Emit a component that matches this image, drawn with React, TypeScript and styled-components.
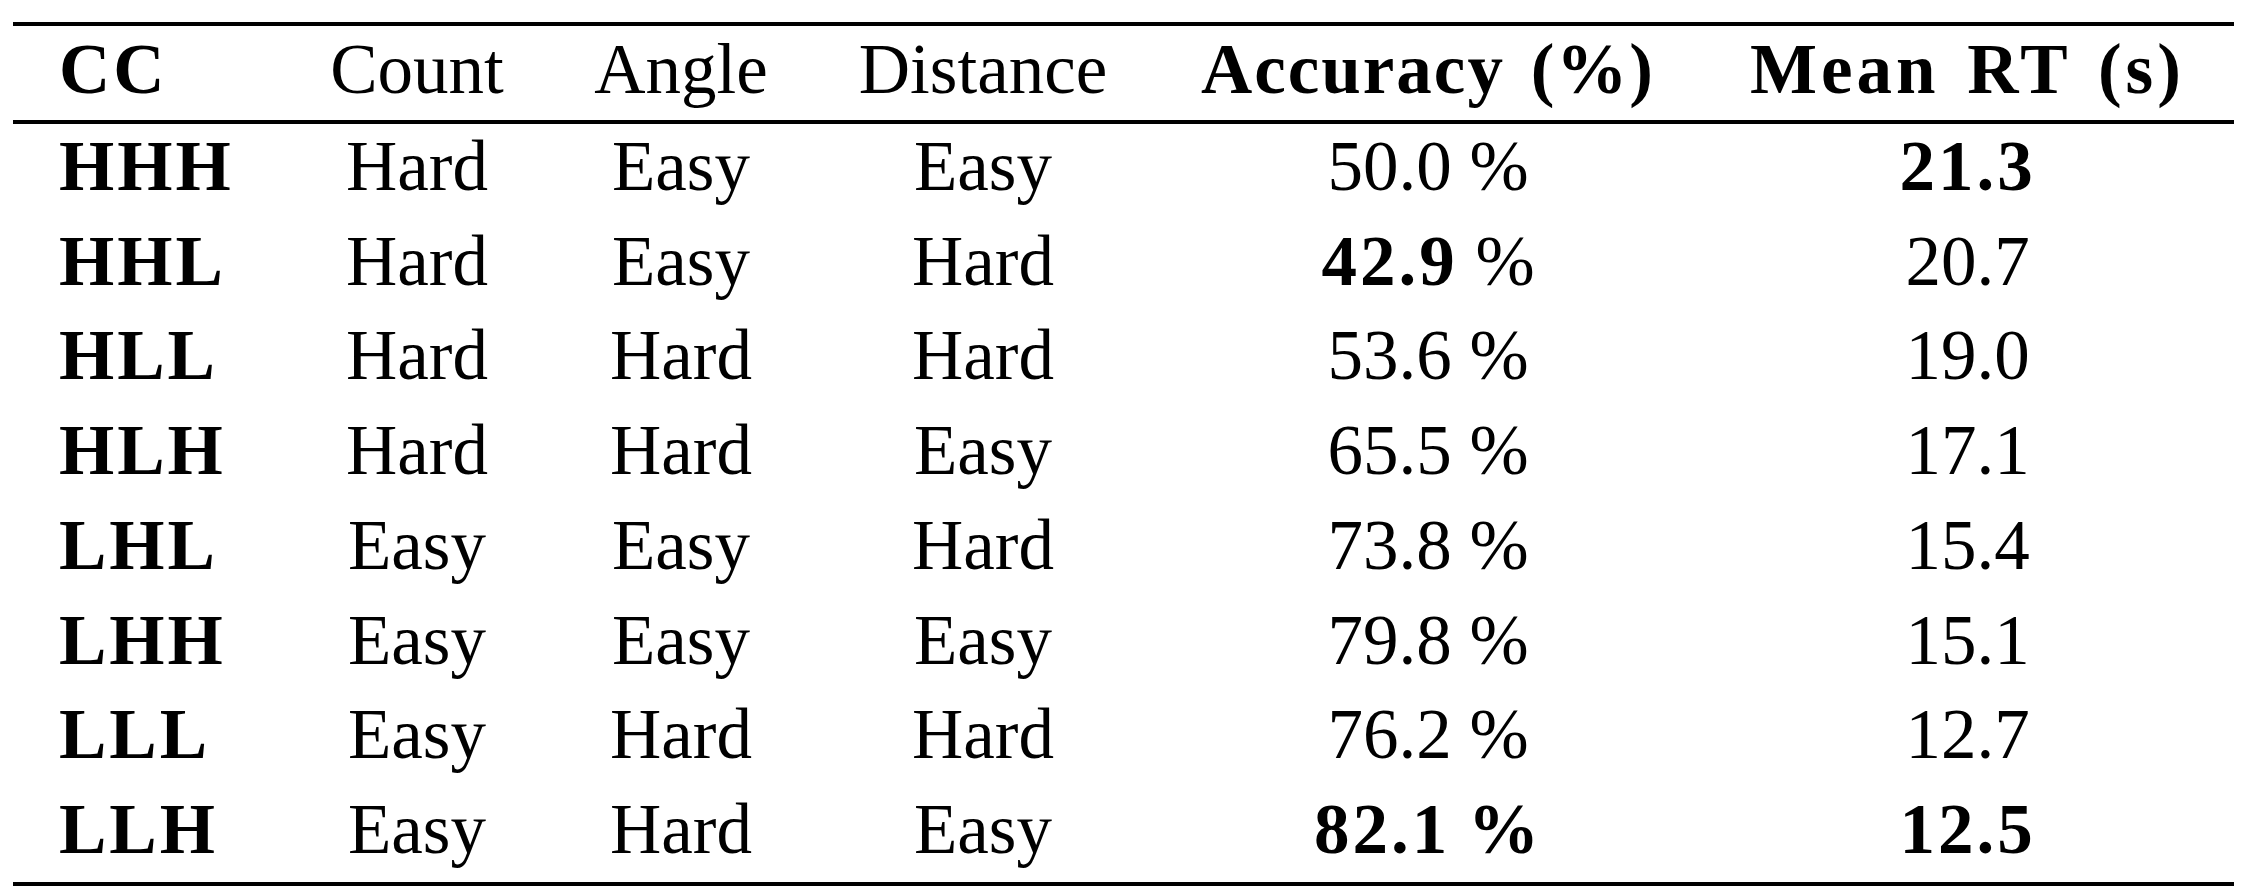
import React from "react";
import styled, { createGlobalStyle } from "styled-components";

const Global = createGlobalStyle`
  html, body { margin: 0; padding: 0; background: #ffffff; }
  body { font-family: "Liberation Serif", "Times New Roman", serif; color: #000; }
`;

const Page = styled.div`
  padding: 22px 0 0 13px;
`;

const Table = styled.div`
  width: 2221px;
  border-top: 4px solid #000;
  border-bottom: 4px solid #000;
`;

const Row = styled.div<{ $head?: boolean }>`
  display: grid;
  grid-template-columns: 270px 268px 260px 344px 546px 533px;
  font-size: 71px;
  line-height: ${(p) => (p.$head ? "86px" : "84.1px")};
  padding-bottom: ${(p) => (p.$head ? "8px" : "10.65px")};
  border-bottom: ${(p) => (p.$head ? "4px solid #000" : "none")};
`;

const Cell = styled.div<{ $left?: boolean }>`
  text-align: ${(p) => (p.$left ? "left" : "center")};
  padding-left: ${(p) => (p.$left ? "46px" : "0")};
  white-space: nowrap;
`;

const B = styled.span`
  font-weight: 700;
  letter-spacing: 3px;
`;

const HeadB = styled.span<{ $ls: number }>`
  font-weight: 700;
  letter-spacing: ${(p) => p.$ls}px;
  word-spacing: 6px;
`;

type Acc = { num: string; boldNum?: boolean; boldPct?: boolean };
type Data = { cc: string; count: string; angle: string; dist: string; acc: Acc; rt: string; boldRt?: boolean };

const data: Data[] = [
  { cc: "HHH", count: "Hard", angle: "Easy", dist: "Easy", acc: { num: "50.0" }, rt: "21.3", boldRt: true },
  { cc: "HHL", count: "Hard", angle: "Easy", dist: "Hard", acc: { num: "42.9", boldNum: true }, rt: "20.7" },
  { cc: "HLL", count: "Hard", angle: "Hard", dist: "Hard", acc: { num: "53.6" }, rt: "19.0" },
  { cc: "HLH", count: "Hard", angle: "Hard", dist: "Easy", acc: { num: "65.5" }, rt: "17.1" },
  { cc: "LHL", count: "Easy", angle: "Easy", dist: "Hard", acc: { num: "73.8" }, rt: "15.4" },
  { cc: "LHH", count: "Easy", angle: "Easy", dist: "Easy", acc: { num: "79.8" }, rt: "15.1" },
  { cc: "LLL", count: "Easy", angle: "Hard", dist: "Hard", acc: { num: "76.2" }, rt: "12.7" },
  { cc: "LLH", count: "Easy", angle: "Hard", dist: "Easy", acc: { num: "82.1", boldNum: true, boldPct: true }, rt: "12.5", boldRt: true },
];

export default function App() {
  return (
    <>
      <Global />
      <Page>
        <Table>
          <Row $head>
            <Cell $left><HeadB $ls={3}>CC</HeadB></Cell>
            <Cell>Count</Cell>
            <Cell>Angle</Cell>
            <Cell>Distance</Cell>
            <Cell><HeadB $ls={2}>Accuracy (%)</HeadB></Cell>
            <Cell><HeadB $ls={4}>Mean RT (s)</HeadB></Cell>
          </Row>
          {data.map((d) => (
            <Row key={d.cc}>
              <Cell $left><B>{d.cc}</B></Cell>
              <Cell>{d.count}</Cell>
              <Cell>{d.angle}</Cell>
              <Cell>{d.dist}</Cell>
              <Cell>
                {d.acc.boldNum ? <B>{d.acc.num}</B> : d.acc.num}{" "}
                {d.acc.boldPct ? <B>%</B> : "%"}
              </Cell>
              <Cell>{d.boldRt ? <B>{d.rt}</B> : d.rt}</Cell>
            </Row>
          ))}
        </Table>
      </Page>
    </>
  );
}
